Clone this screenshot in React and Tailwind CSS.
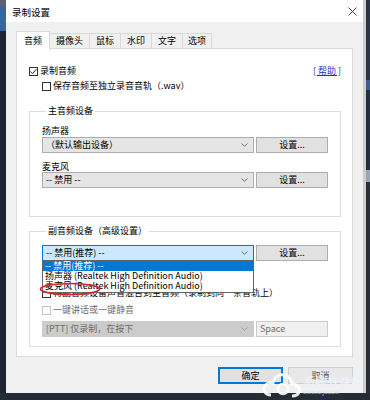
import React from "react";

function Box({ checked, disabled }) {
  return (
    <span
      className={
        disabled
          ? "w-[9px] h-[9px] border border-[#c4c4c4] bg-white flex items-center justify-center shrink-0"
          : "w-[9px] h-[9px] border border-[#333333] bg-white flex items-center justify-center shrink-0"
      }
    >
      {checked && (
        <svg width="7" height="7" viewBox="0 0 7 7">
          <path d="M0.6 3.5 L2.6 5.6 L6.4 1.1" fill="none" stroke="#222" strokeWidth="1" />
        </svg>
      )}
    </span>
  );
}

function Chevron({ color = "#606060" }) {
  return (
    <svg width="7" height="4" viewBox="0 0 7 4">
      <path d="M0.5 0.5 L3.5 3.3 L6.5 0.5" fill="none" stroke={color} strokeWidth="0.9" />
    </svg>
  );
}

function Select({ children, variant }) {
  const cls =
    variant === "focus"
      ? "w-[212px] h-[16px] border border-[#0078d7] bg-[#cce8ff] flex items-center justify-between pl-[3px] pr-[5px] text-black"
      : variant === "disabled"
      ? "w-[212px] h-[16px] border border-[#cccccc] bg-[#cccccc] flex items-center justify-between pl-[3px] pr-[5px] text-[#6d6d6d]"
      : "w-[212px] h-[16px] border border-[#adadad] bg-[#e5e5e5] flex items-center justify-between pl-[3px] pr-[5px] text-black";
  return (
    <div className={cls}>
      <span className="leading-[12px] whitespace-nowrap">{children}</span>
      <Chevron color={variant === "disabled" ? "#a0a0a0" : "#606060"} />
    </div>
  );
}

function SetBtn() {
  return (
    <div className="w-[72px] h-[16px] border border-[#adadad] bg-[#e1e1e1] flex items-center justify-center leading-[12px]">
      设置...
    </div>
  );
}

export default function App() {
  return (
    <div className="w-[370px] h-[400px] flex flex-col bg-[#232b36] overflow-hidden font-['Noto_Sans_CJK_SC','Noto_Sans',sans-serif] text-[9px] text-black">
      <div className="flex h-[393px]">
        <div className="w-[6px] flex flex-col">
          <div className="h-[7px] bg-[#5b6370]" />
          <div className="h-[24px] bg-[#3a679a]" />
          <div className="flex-1 bg-[#1e2631]" />
        </div>

        <div className="w-[357px] h-[393px] flex flex-col bg-[#f0f0f0] relative">
          {/* title bar */}
          <div className="h-[22px] bg-white flex items-center justify-between pl-[6px] pr-[6px]">
            <span className="text-[9.5px] leading-[12px] pt-[2px]">录制设置</span>
            <svg width="9" height="9" viewBox="0 0 9 9" className="mt-[1px]">
              <path d="M0.5 0.5 L8.5 8.5 M8.5 0.5 L0.5 8.5" stroke="#333" strokeWidth="0.9" />
            </svg>
          </div>

          {/* tabs */}
          <div className="flex items-end pl-[10px] mt-[9px] h-[17px] relative z-10">
            <div className="h-[19px] -mb-[2px] px-[7px] bg-white border border-b-0 border-[#d9d9d9] flex items-center leading-[12px]">
              音频
            </div>
            <div className="h-[15px] px-[6px] border-t border-r border-[#d9d9d9] flex items-center leading-[12px]">摄像头</div>
            <div className="h-[15px] px-[6px] border-t border-r border-[#d9d9d9] flex items-center leading-[12px]">鼠标</div>
            <div className="h-[15px] px-[6px] border-t border-r border-[#d9d9d9] flex items-center leading-[12px]">水印</div>
            <div className="h-[15px] px-[6px] border-t border-r border-[#d9d9d9] flex items-center leading-[12px]">文字</div>
            <div className="h-[15px] px-[5px] border-t border-r border-[#d9d9d9] flex items-center leading-[12px]">选项</div>
          </div>

          {/* panel */}
          <div className="mx-[10px] h-[309px] bg-white border border-[#d9d9d9] pl-[12px] pr-[11px] pt-[16px] flex flex-col">
            <div className="flex items-center justify-between h-[12px]">
              <div className="flex items-center gap-[2px]">
                <Box checked />
                <span className="leading-[12px]">录制音频</span>
              </div>
              <span className="leading-[12px] text-[#2a2ad0] underline whitespace-pre">[ 帮助 ]</span>
            </div>
            <div className="flex items-center gap-[2px] h-[12px] mt-[3px] pl-[13px]">
              <Box />
              <span className="leading-[12px]">保存音频至独立录音音轨（.wav）</span>
            </div>

            <fieldset className="mt-[13px] border border-[#dcdcdc] pl-[12px] pr-[12px] pt-[8px] pb-[28px]">
              <legend className="ml-[4px] px-[2px] leading-[12px]">主音频设备</legend>
              <div className="leading-[11px]">扬声器</div>
              <div className="flex gap-[2px] mt-[1px]">
                <Select>（默认输出设备）</Select>
                <SetBtn />
              </div>
              <div className="leading-[11px] mt-[8px]">麦克风</div>
              <div className="flex gap-[2px]">
                <Select>-- 禁用 --</Select>
                <SetBtn />
              </div>
            </fieldset>

            <fieldset className="mt-[8px] border border-[#dcdcdc] pl-[12px] pr-[12px] pt-[8px] pb-[9px]">
              <legend className="ml-[4px] px-[2px] leading-[12px]">副音频设备（高级设置）</legend>
              <div className="flex gap-[2px] relative z-10">
                <div className="relative">
                  <Select variant="focus">-- 禁用(推荐) --</Select>
                  <div className="absolute left-0 top-[15px] w-[212px] h-[33px] bg-white border border-[#646464] flex flex-col">
                    <div className="h-[10px] bg-[#0078d7] text-white leading-[10px] pl-[2px] whitespace-nowrap">-- 禁用(推荐) --</div>
                    <div className="h-[10px] leading-[10px] pl-[2px] whitespace-nowrap">扬声器 (Realtek High Definition Audio)</div>
                    <div className="h-[10px] leading-[10px] pl-[2px] whitespace-nowrap">麦克风 (Realtek High Definition Audio)</div>
                  </div>
                  <svg className="absolute left-[-3px] top-[37px]" width="62" height="14" viewBox="0 0 62 14">
                    <ellipse cx="31" cy="7" rx="29.5" ry="5.5" fill="none" stroke="#d7262b" strokeWidth="1.6" />
                  </svg>
                </div>
                <SetBtn />
              </div>
              <div className="flex items-center gap-[2px] h-[12px] mt-[26px]">
                <Box />
                <span className="leading-[12px] whitespace-nowrap">将副音频设备声音混合到主音频（录制到同一条音轨上）</span>
              </div>
              <div className="flex items-center gap-[2px] h-[12px] mt-[5px]">
                <Box disabled />
                <span className="leading-[12px] text-[#6d6d6d]">一键讲话或一键静音</span>
              </div>
              <div className="flex gap-[2px] mt-[5px]">
                <Select variant="disabled">[PTT] 仅录制，在按下</Select>
                <div className="w-[72px] h-[16px] border border-[#cccccc] bg-[#f0f0f0] flex items-center pl-[3px] leading-[12px] text-[#6d6d6d]">
                  Space
                </div>
              </div>
            </fieldset>
          </div>

          {/* buttons */}
          <div className="flex justify-end gap-[5px] pr-[10px] mt-[10px]">
            <div className="w-[65px] h-[17px] border-2 border-[#0078d7] bg-[#e1e1e1] flex items-center justify-center leading-[12px]">
              确定
            </div>
            <div className="w-[65px] h-[17px] border border-[#cfcfcf] bg-[#e8e8e8] flex items-center justify-center leading-[12px] text-[#555]">
              取消
            </div>
          </div>

          {/* watermark */}
          <div className="absolute left-[256px] top-[368px] flex items-start gap-[1px] pointer-events-none opacity-90">
            <svg width="40" height="30" viewBox="0 0 40 30">
              <path
                d="M9 27 C3 27 1 22 3 18 C5 14 9 14 11 15 C12 9 17 6 22 7 C27 8 30 12 30 16 C35 16 38 20 37 24 C36 27 33 28 30 28"
                fill="none"
                stroke="#ffffff"
                strokeWidth="3"
              />
              <circle cx="21" cy="21" r="5" fill="none" stroke="#ffffff" strokeWidth="2.5" />
            </svg>
            <div className="flex flex-col mt-[7px]">
              <span className="text-[12px] leading-[14px] text-[#eef3f8] font-bold">系统软件网</span>
              <span className="text-[5px] leading-[6px] text-[#dfe6ee]">www.xtrjw.com</span>
            </div>
          </div>
        </div>

        <div className="w-[3px] bg-[#cdcdcd]" />
        <div className="w-[4px] flex flex-col">
          <div className="h-[80px] bg-[#2a3442]" />
          <div className="h-[10px] bg-[#3b5f8a]" />
          <div className="h-[80px] bg-[#243040]" />
          <div className="h-[12px] bg-[#9aa6b2]" />
          <div className="flex-1 bg-[#2a3038]" />
        </div>
      </div>
      <div className="h-[7px] bg-[#262c35]" />
    </div>
  );
}
